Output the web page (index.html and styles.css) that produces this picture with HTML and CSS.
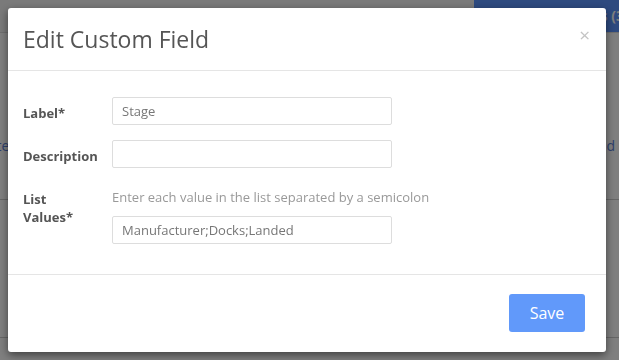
FILE: index.html
```html
<!DOCTYPE html>
<html lang="en">

<head>
    <meta charset="UTF-8">
    <meta name="viewport" content="width=device-width, initial-scale=1.0">
    <title>Edit Custom Field</title>
    <link rel="stylesheet" href="styles.css">
</head>

<body>

    <!-- Page behind the modal -->
    <div class="page">
        <div class="topbar">
            <div class="topbar-fill"></div>
            <div class="topbar-btn">Custom Fields (3)</div>
        </div>
        <div class="page-row first">
            <span class="link">Delete</span>
            <span class="link right">Add Field</span>
        </div>
        <div class="page-row">
            <span class="cell">Due Date</span>
            <span class="cell">Type</span>
        </div>
    </div>

    <div class="backdrop"></div>

    <div class="modal">
        <div class="modal-header">
            <h2 class="modal-title">Edit Custom Field</h2>
            <span class="close">&times;</span>
        </div>

        <div class="modal-body">
            <div class="form-row">
                <label class="field-label">Label*</label>
                <div class="field">
                    <input type="text" class="text-input" value="Stage">
                </div>
            </div>
            <div class="form-row">
                <label class="field-label">Description</label>
                <div class="field">
                    <input type="text" class="text-input">
                </div>
            </div>
            <div class="form-row">
                <label class="field-label">List Values*</label>
                <div class="field">
                    <p class="help">Enter each value in the list separated by a semicolon</p>
                    <input type="text" class="text-input" value="Manufacturer;Docks;Landed">
                </div>
            </div>
        </div>

        <div class="modal-footer">
            <button class="btn-save">Save</button>
        </div>
    </div>

</body>

</html>
```

FILE: styles.css
```css
/* Global Styles */
body {
    margin: 0;
    font-family: 'Open Sans', sans-serif;
    font-size: 13px;
    color: #555;
    background-color: #fff;
    height: 360px;
    overflow: hidden;
}

/* Page behind */
.page {
    width: 619px;
    overflow: hidden;
}

.topbar {
    display: flex;
    height: 32px;
    border-bottom: 1px solid #ddd;
}

.topbar-fill {
    flex: 1;
    background-color: #f4f4f4;
}

.topbar-btn {
    width: 145px;
    padding-left: 36px;
    box-sizing: border-box;
    background-color: #5c94ff;
    color: #fff;
    font-weight: bold;
    font-size: 14px;
    line-height: 32px;
    white-space: nowrap;
    overflow: hidden;
}

.page-row {
    display: flex;
    justify-content: space-between;
    border-bottom: 1px solid #ccc;
    height: 137px;
    font-size: 14px;
}

.page-row.first {
    height: 166px;
    align-items: flex-start;
}

.link {
    color: #5c80d8;
    margin-top: 103px;
}

.link:first-child {
    margin-left: -33px;
}

.link.right {
    margin-right: 4px;
}

.cell {
    margin-top: 136px;
    color: #333;
}

.cell:first-child {
    margin-left: -1px;
}

.cell + .cell {
    margin-right: 180px;
}

/* Modal */
.backdrop {
    position: fixed;
    inset: 0;
    background-color: rgba(0, 0, 0, 0.5);
}

.modal {
    position: fixed;
    top: 8px;
    left: 8px;
    width: 598px;
    background-color: #fff;
    border-radius: 3px;
    box-shadow: 0 3px 9px rgba(0, 0, 0, 0.5);
}

.modal-header {
    display: flex;
    justify-content: space-between;
    align-items: flex-start;
    padding: 19px 15px 19px;
    border-bottom: 1px solid #e5e5e5;
}

.modal-title {
    margin: 0;
    font-size: 23px;
    font-weight: normal;
    line-height: 24px;
    color: #555;
}

.close {
    font-size: 19px;
    line-height: 16px;
    color: #c4c4c4;
    margin-right: 1px;
}

.modal-body {
    padding: 26px 15px 15px;
}

.form-row {
    display: flex;
    margin-bottom: 15px;
}

.field-label {
    width: 75px;
    padding: 7px 14px 0 0;
    font-weight: bold;
    line-height: 18px;
    color: #555;
}

.field {
    flex: 1;
}

.text-input {
    box-sizing: border-box;
    width: 280px;
    height: 28px;
    padding: 0 9px;
    border: 1px solid #ddd;
    border-radius: 2px;
    font-family: 'Open Sans', sans-serif;
    font-size: 13px;
    color: #777;
    outline: none;
}

.help {
    margin: 5px 0 10px;
    line-height: 18px;
    color: #999;
}

.modal-footer {
    display: flex;
    justify-content: flex-end;
    padding: 19px 21px 20px;
    border-top: 1px solid #e5e5e5;
}

.btn-save {
    width: 76px;
    height: 38px;
    border: none;
    border-radius: 3px;
    background-color: #6199fa;
    color: #fff;
    font-family: 'Open Sans', sans-serif;
    font-size: 16px;
}
```
